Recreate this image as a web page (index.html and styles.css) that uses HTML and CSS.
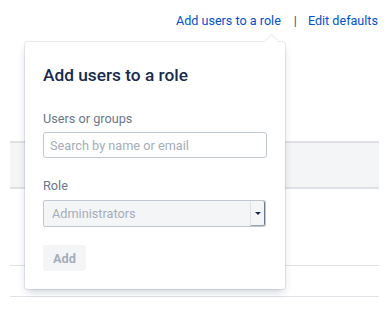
FILE: index.html
```html
<!DOCTYPE html>
<html lang="en">
<head>
  <meta charset="UTF-8">
  <meta name="viewport" content="width=device-width, initial-scale=1.0">
  <title>Roles</title>
  <link rel="stylesheet" href="styles.css">
</head>
<body>
  <div class="actions">
    <a href="#" class="action-link">Add users to a role</a>
    <span class="sep">|</span>
    <a href="#" class="action-link">Edit defaults</a>
  </div>

  <div class="roles-table">
    <div class="table-head"></div>
    <div class="table-row tall"></div>
    <div class="table-row"></div>
  </div>

  <div class="popup">
    <h3 class="popup-title">Add users to a role</h3>
    <label class="field-label" for="users">Users or groups</label>
    <input id="users" class="text-input" type="text" placeholder="Search by name or email">
    <div class="field-label role-label">Role</div>
    <div class="select-box">
      <span class="select-value">Administrators</span>
      <span class="select-button"><span class="caret"></span></span>
    </div>
    <button class="add-button" disabled>Add</button>
  </div>
</body>
</html>
```

FILE: styles.css
```css
body {
  margin: 0;
  font-family: Roboto, "Liberation Sans", sans-serif;
  color: #172b4d;
  background-color: #fff;
}
.actions {
  display: flex;
  justify-content: flex-end;
  align-items: center;
  gap: 11px;
  padding: 12px 12px 0 0;
  font-size: 12.6px;
  line-height: 18px;
}
.actions .sep {
  margin-left: 2px;
}
.action-link {
  color: #0052cc;
  text-decoration: none;
}
.sep {
  color: #42526e;
}
.roles-table {
  margin: 111px 11px 0 10px;
}
.table-head {
  height: 44px;
  background-color: #f4f5f7;
  border-top: 2px solid #dfe1e6;
  border-bottom: 2px solid #dfe1e6;
}
.table-row {
  height: 30px;
  border-bottom: 1px solid #dfe1e6;
}
.table-row.tall {
  height: 76px;
}
.popup {
  position: absolute;
  top: 42px;
  left: 25px;
  width: 260px;
  height: 247px;
  box-sizing: border-box;
  padding: 21px 18px 18px;
  background-color: #fff;
  border-radius: 3px;
  box-shadow: 0 0 0 1px rgba(9, 30, 66, 0.08), 0 4px 8px -2px rgba(9, 30, 66, 0.25);
  display: flex;
  flex-direction: column;
  align-items: flex-start;
}
.popup::before {
  content: "";
  position: absolute;
  top: -5px;
  left: 242px;
  width: 9px;
  height: 9px;
  background-color: #fff;
  transform: rotate(45deg);
  box-shadow: -1px -1px 0 0 rgba(9, 30, 66, 0.08);
}
.popup-title {
  margin: 0;
  font-size: 17.3px;
  line-height: 24px;
  font-weight: 500;
  color: #172b4d;
}
.field-label {
  margin-top: 24px;
  font-size: 12.7px;
  line-height: 16px;
  color: #6b778c;
}
.role-label {
  margin-top: 20px;
}
.text-input {
  margin-top: 5px;
  width: 224px;
  height: 26px;
  box-sizing: border-box;
  padding: 0 6px;
  border: 1px solid #c1c7d0;
  border-radius: 3px;
  font-family: inherit;
  font-size: 12.7px;
  color: #172b4d;
  outline: none;
}
.text-input::placeholder {
  color: #a5adba;
}
.select-box {
  margin-top: 6px;
  width: 223px;
  height: 27px;
  box-sizing: border-box;
  display: flex;
  align-items: stretch;
  background-color: #f4f5f7;
  border: 1px solid #c1c7d0;
  border-radius: 2px;
}
.select-value {
  flex: 1;
  display: flex;
  align-items: center;
  padding-left: 8px;
  font-size: 12.7px;
  color: #a5adba;
}
.select-button {
  width: 13px;
  display: flex;
  align-items: center;
  justify-content: center;
  background-color: #f4f5f7;
  border-left: 1px solid #dfe1e6;
  border-right: 1px solid #6b778c;
  border-bottom: 1px solid #97a0af;
  border-radius: 0 2px 2px 0;
}
.caret {
  width: 0;
  height: 0;
  border-left: 3px solid transparent;
  border-right: 3px solid transparent;
  border-top: 3px solid #172b4d;
}
.add-button {
  margin-top: 18px;
  height: 26px;
  padding: 0 10px;
  border: none;
  border-radius: 3px;
  background-color: #f4f5f7;
  color: #a5adba;
  font-family: inherit;
  font-size: 12.7px;
  font-weight: 700;
}
```
